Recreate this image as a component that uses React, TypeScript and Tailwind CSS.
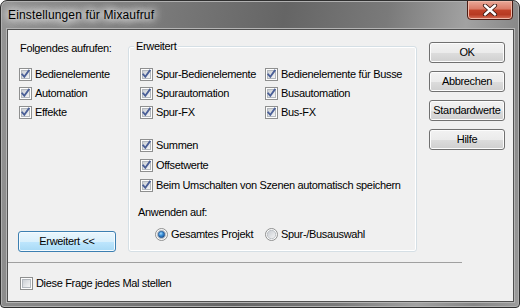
import React from "react";

const font = { fontFamily: "'Liberation Sans', Arial, sans-serif" };

function CheckBox({ checked = true }: { checked?: boolean }) {
  return (
    <svg width="13" height="13" viewBox="0 0 13 13" className="shrink-0">
      <defs>
        <linearGradient id="cbFill" x1="0" y1="0" x2="1" y2="1">
          <stop offset="0" stopColor="#c9cdd3" />
          <stop offset="1" stopColor="#f7f7f7" />
        </linearGradient>
      </defs>
      <rect x="0.5" y="0.5" width="12" height="12" fill="#fdfdfd" stroke="#8e8f8f" />
      <rect x="2.5" y="2.5" width="8" height="8" fill="url(#cbFill)" stroke="#b2b7bd" />
      {checked && (
        <path
          d="M3.2 6.4 L5.3 8.8 L9.8 2.6"
          fill="none"
          stroke="#4a5f97"
          strokeWidth="1.8"
          strokeLinecap="square"
        />
      )}
    </svg>
  );
}

function Radio({ checked = false }: { checked?: boolean }) {
  return (
    <svg width="13" height="13" viewBox="0 0 13 13" className="shrink-0">
      <defs>
        <linearGradient id="rdFill" x1="0" y1="0" x2="1" y2="1">
          <stop offset="0" stopColor="#c5c9cf" />
          <stop offset="1" stopColor="#f7f7f7" />
        </linearGradient>
        <radialGradient id="rdDot" cx="0.4" cy="0.35" r="0.7">
          <stop offset="0" stopColor="#a8dcfb" />
          <stop offset="0.45" stopColor="#3a8fd8" />
          <stop offset="1" stopColor="#1b4e8c" />
        </radialGradient>
      </defs>
      <circle cx="6.5" cy="6.5" r="6" fill="#fbfbfb" stroke="#8e8f8f" />
      <circle cx="6.5" cy="6.5" r="4.2" fill="url(#rdFill)" stroke="#b2b7bd" strokeWidth="0.8" />
      {checked && <circle cx="6.5" cy="6.5" r="3.2" fill="url(#rdDot)" stroke="#1f4d86" strokeWidth="0.6" />}
    </svg>
  );
}

function Row({ label, checked = true, h = "h-[19px]" }: { label: string; checked?: boolean; h?: string }) {
  return (
    <div className={`flex ${h} items-center gap-[3px] whitespace-nowrap`}>
      <CheckBox checked={checked} />
      <span>{label}</span>
    </div>
  );
}

function WinButton({ children, blue = false, w = "w-[76px]" }: { children: React.ReactNode; blue?: boolean; w?: string }) {
  return (
    <button
      className={
        blue
          ? `${w} h-[21px] rounded-[3px] border border-[#3c7fb1] bg-[linear-gradient(#eaf6fd_0%,#d9f0fc_50%,#bee6fd_51%,#a7d9f5_100%)] shadow-[inset_0_0_0_1px_#f4fbff] text-black flex items-center justify-center`
          : `${w} h-[21px] rounded-[3px] border border-[#707070] bg-[linear-gradient(#f2f2f2_0%,#ebebeb_50%,#dddddd_51%,#cfcfcf_100%)] shadow-[inset_0_0_0_1px_#fcfcfc] text-black flex items-center justify-center`
      }
    >
      {children}
    </button>
  );
}

export default function App() {
  return (
    <div className="w-[520px] h-[308px] bg-white" style={font}>
      <div className="relative w-[520px] h-[308px] rounded-t-[7px] rounded-b-[4px] border border-[#2f2f2f] bg-[linear-gradient(100deg,#959595_0%,#7a7a7a_28%,#656565_50%,#7a7a7a_68%,#a2a2a2_82%,#868686_92%,#9c9c9c_100%)] shadow-[inset_0_0_0_1px_#b0b0b0] flex flex-col overflow-hidden">
        {/* Title bar */}
        <div className="h-[28px] flex items-center pl-[7px] shrink-0">
          <span className="text-[12px] tracking-[0.15px] text-black [text-shadow:0_0_8px_#ffffff,0_0_8px_#ffffff,0_0_12px_#ffffff]">
            Einstellungen für Mixaufruf
          </span>
        </div>
        <div className="absolute right-[6px] top-[-1px] w-[46px] h-[20px] rounded-b-[4px] border border-[#4a1c14] bg-[linear-gradient(#e9a898_0%,#d97a66_45%,#c2432a_50%,#b73a22_75%,#d5705a_100%)] shadow-[inset_0_0_0_1px_#f0b8a8] flex items-center justify-center">
          <svg width="16" height="12" viewBox="0 0 16 12">
            <path d="M3 1.5 L13 10.5 M13 1.5 L3 10.5" stroke="#3a1a14" strokeWidth="4.2" strokeLinecap="round" />
            <path d="M3 1.5 L13 10.5 M13 1.5 L3 10.5" stroke="#ffffff" strokeWidth="2.4" strokeLinecap="round" />
          </svg>
        </div>

        {/* Client area */}
        <div className="ml-[6px] mr-[5px] mb-[5px] flex-1 border border-[#4f4f4f] bg-[#f0f0f0] shadow-[0_0_0_1px_#b4b4b4] flex flex-col text-[11px] tracking-[-0.33px] text-black">
          <div className="h-[232px] flex shrink-0">
            {/* Left column */}
            <div className="w-[120px] pl-[11px] pt-[11px] pb-[10px] flex flex-col">
              <div className="h-[15px] leading-[15px] pl-[1px] whitespace-nowrap">Folgendes aufrufen:</div>
              <div className="mt-[9px] flex flex-col">
                <Row label="Bedienelemente" />
                <Row label="Automation" />
                <Row label="Effekte" />
              </div>
              <div className="mt-auto ml-[-1px]">
                <WinButton blue w="w-[98px]">Erweitert &lt;&lt;</WinButton>
              </div>
            </div>

            {/* Group box */}
            <div className="relative mt-[16px] w-[289px] h-[206px] rounded-[3px] border border-[#d5dfe5] shadow-[inset_0_0_0_1px_#ffffff] pl-[11px] pt-[18px]">
              <span className="absolute left-[5px] top-[-8px] px-[2px] bg-[#f0f0f0] leading-[15px]">Erweitert</span>
              <div className="flex">
                <div className="w-[125px] flex flex-col">
                  <Row label="Spur-Bedienelemente" />
                  <Row label="Spurautomation" />
                  <Row label="Spur-FX" />
                </div>
                <div className="flex flex-col">
                  <Row label="Bedienelemente für Busse" />
                  <Row label="Busautomation" />
                  <Row label="Bus-FX" />
                </div>
              </div>
              <div className="mt-[13px] flex flex-col">
                <Row label="Summen" h="h-[20px]" />
                <Row label="Offsetwerte" h="h-[20px]" />
                <Row label="Beim Umschalten von Szenen automatisch speichern" h="h-[20px]" />
              </div>
              <div className="mt-[10px] ml-[-2px] h-[15px] leading-[15px]">Anwenden auf:</div>
              <div className="mt-[5px] pl-[15px] flex h-[19px] items-center whitespace-nowrap">
                <div className="w-[110px] flex items-center gap-[3px]">
                  <Radio checked />
                  <span>Gesamtes Projekt</span>
                </div>
                <div className="flex items-center gap-[3px]">
                  <Radio />
                  <span>Spur-/Busauswahl</span>
                </div>
              </div>
            </div>

            {/* Buttons */}
            <div className="ml-[12px] mt-[12px] flex flex-col gap-[8px]">
              <WinButton>OK</WinButton>
              <WinButton>Abbrechen</WinButton>
              <WinButton>Standardwerte</WinButton>
              <WinButton>Hilfe</WinButton>
            </div>
          </div>

          <div className="w-[454px] h-px bg-[#a0a0a0] shrink-0" />

          <div className="mt-[11px] pl-[12px]">
            <Row label="Diese Frage jedes Mal stellen" checked={false} />
          </div>
        </div>
      </div>
    </div>
  );
}
